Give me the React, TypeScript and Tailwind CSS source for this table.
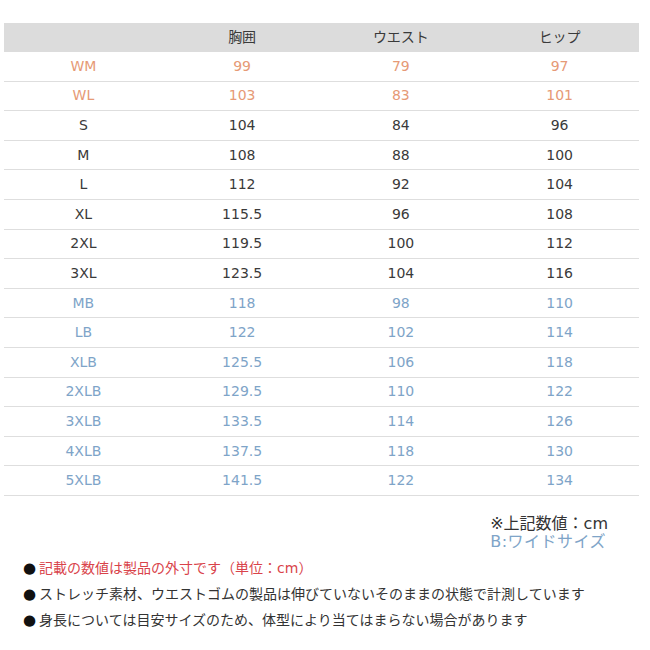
const rows: { size: string; chest: string; waist: string; hip: string; tone: "w" | "n" | "b" }[] = [
  { size: "WM", chest: "99", waist: "79", hip: "97", tone: "w" },
  { size: "WL", chest: "103", waist: "83", hip: "101", tone: "w" },
  { size: "S", chest: "104", waist: "84", hip: "96", tone: "n" },
  { size: "M", chest: "108", waist: "88", hip: "100", tone: "n" },
  { size: "L", chest: "112", waist: "92", hip: "104", tone: "n" },
  { size: "XL", chest: "115.5", waist: "96", hip: "108", tone: "n" },
  { size: "2XL", chest: "119.5", waist: "100", hip: "112", tone: "n" },
  { size: "3XL", chest: "123.5", waist: "104", hip: "116", tone: "n" },
  { size: "MB", chest: "118", waist: "98", hip: "110", tone: "b" },
  { size: "LB", chest: "122", waist: "102", hip: "114", tone: "b" },
  { size: "XLB", chest: "125.5", waist: "106", hip: "118", tone: "b" },
  { size: "2XLB", chest: "129.5", waist: "110", hip: "122", tone: "b" },
  { size: "3XLB", chest: "133.5", waist: "114", hip: "126", tone: "b" },
  { size: "4XLB", chest: "137.5", waist: "118", hip: "130", tone: "b" },
  { size: "5XLB", chest: "141.5", waist: "122", hip: "134", tone: "b" },
];

const toneClass = {
  w: "text-[#e69a76]",
  n: "text-[#3a3a3a]",
  b: "text-[#7ea4c8]",
};

export default function App() {
  return (
    <div className="w-[650px] h-[650px] bg-white font-['DejaVu_Sans','Noto_Sans_CJK_JP',sans-serif]">
      <div className="pt-[23px] pl-[4px]">
        <div className="w-[635px]">
          {/* header */}
          <div className="grid grid-cols-4 h-[29px] bg-[#dcdcdc] items-center text-center text-[14px] text-[#3a3a3a]">
            <div></div>
            <div>胸囲</div>
            <div>ウエスト</div>
            <div>ヒップ</div>
          </div>
          {rows.map((r) => (
            <div
              key={r.size}
              className={`grid grid-cols-4 h-[29.6px] items-center text-center text-[14px] border-b border-[#dedede] ${toneClass[r.tone]}`}
            >
              <div>{r.size}</div>
              <div>{r.chest}</div>
              <div>{r.waist}</div>
              <div>{r.hip}</div>
            </div>
          ))}
        </div>
      </div>

      {/* unit note */}
      <div className="flex justify-end pr-[42px] mt-[19px]">
        <div className="leading-[18px]">
          <div className="text-[16px] text-[#333333]">※上記数値：cm</div>
          <div className="text-[16px] text-[#7ea4c8] tracking-[0.5px]">B:ワイドサイズ</div>
        </div>
      </div>

      {/* notes */}
      <div className="pl-[23px] mt-[4px] text-[14px] leading-[26px] text-[#333333]">
        <div className="flex items-center gap-[3px]">
          <span className="text-[15px] text-[#111]">●</span>
          <span className="text-[#d9434a]">記載の数値は製品の外寸です（単位：cm）</span>
        </div>
        <div className="flex items-center gap-[3px]">
          <span className="text-[15px] text-[#111]">●</span>
          <span>ストレッチ素材、ウエストゴムの製品は伸びていないそのままの状態で計測しています</span>
        </div>
        <div className="flex items-center gap-[3px]">
          <span className="text-[15px] text-[#111]">●</span>
          <span>身長については目安サイズのため、体型により当てはまらない場合があります</span>
        </div>
      </div>
    </div>
  );
}
